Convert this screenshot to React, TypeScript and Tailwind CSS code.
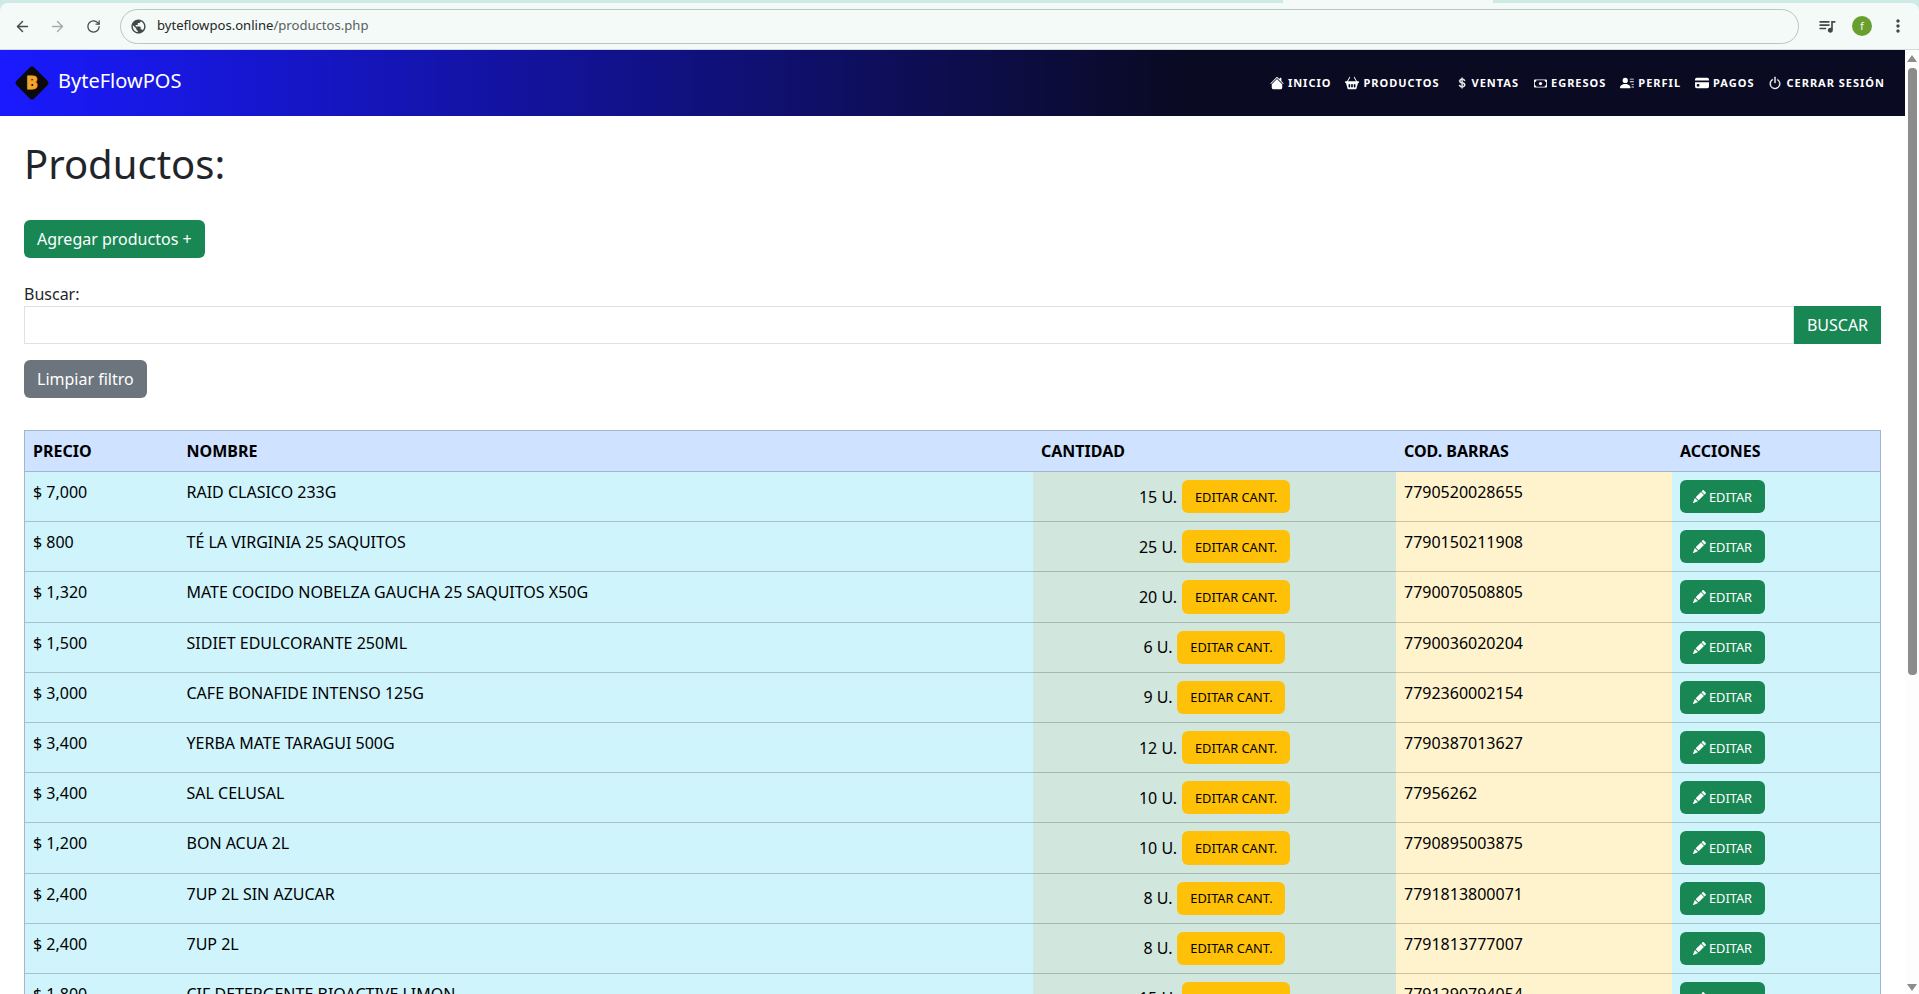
import React from "react";
import { ArrowLeft, ArrowRight, RotateCw } from "lucide-react";
import { MdPublic, MdQueueMusic, MdMoreVert } from "react-icons/md";
import {
  BsHouseFill,
  BsBasket2Fill,
  BsCurrencyDollar,
  BsCash,
  BsPersonLinesFill,
  BsCreditCardFill,
  BsPower,
  BsPencilFill,
} from "react-icons/bs";

const nav = [
  { icon: <BsHouseFill size={14} />, label: "INICIO" },
  { icon: <BsBasket2Fill size={14} />, label: "PRODUCTOS" },
  { icon: <BsCurrencyDollar size={12} stroke="currentColor" strokeWidth={0.6} className="ml-[2px]" />, label: "VENTAS" },
  { icon: <BsCash size={13} className="ml-[1px]" />, label: "EGRESOS" },
  { icon: <BsPersonLinesFill size={14} />, label: "PERFIL" },
  { icon: <BsCreditCardFill size={14} />, label: "PAGOS" },
  { icon: <BsPower size={14} stroke="currentColor" strokeWidth={0.5} />, label: "CERRAR SESIÓN" },
];

const rows = [
  ["$ 7,000", "RAID CLASICO 233G", "15 U.", "7790520028655"],
  ["$ 800", "TÉ LA VIRGINIA 25 SAQUITOS", "25 U.", "7790150211908"],
  ["$ 1,320", "MATE COCIDO NOBELZA GAUCHA 25 SAQUITOS X50G", "20 U.", "7790070508805"],
  ["$ 1,500", "SIDIET EDULCORANTE 250ML", "6 U.", "7790036020204"],
  ["$ 3,000", "CAFE BONAFIDE INTENSO 125G", "9 U.", "7792360002154"],
  ["$ 3,400", "YERBA MATE TARAGUI 500G", "12 U.", "7790387013627"],
  ["$ 3,400", "SAL CELUSAL", "10 U.", "77956262"],
  ["$ 1,200", "BON ACUA 2L", "10 U.", "7790895003875"],
  ["$ 2,400", "7UP 2L SIN AZUCAR", "8 U.", "7791813800071"],
  ["$ 2,400", "7UP 2L", "8 U.", "7791813777007"],
  ["$ 1,800", "CIF DETERGENTE BIOACTIVE LIMON", "15 U.", "7791290794054"],
];

function BrowserBar() {
  return (
    <header className="bg-[#cdebe4] pt-[3px] h-[50px] shrink-0 relative [font-family:'Noto_Sans',sans-serif]">
      <div className="absolute top-0 left-[1283px] w-[210px] h-[3px] bg-[#f4faf8]" />
      <div className="h-[47px] bg-[#f4faf8] rounded-t-[8px] border-b border-[#d3dbd8] flex items-center">
        <div className="w-[120px] flex items-center shrink-0 text-[#3f4a47]">
          <ArrowLeft size={17} className="ml-[14px]" strokeWidth={2} />
          <ArrowRight size={17} className="ml-[18px] text-[#a3adaa]" strokeWidth={2} />
          <RotateCw size={15} className="ml-[20px]" strokeWidth={2} />
        </div>
        <div className="w-[1679px] h-[35px] rounded-full border border-[#b9c6c2] flex items-center shrink-0">
          <MdPublic size={17} className="ml-[9px] text-[#3f4a47]" />
          <span className="ml-[10px] text-[13.1px] text-[#1f2624]">
            byteflowpos.online<span className="text-[#56605d]">/productos.php</span>
          </span>
        </div>
        <div className="flex-1 flex items-center text-[#3f4a47]">
          <MdQueueMusic size={20} className="ml-[18px]" />
          <div className="ml-[15px] w-[20px] h-[20px] rounded-full bg-[#6a9e2f] text-white text-[10px] flex items-center justify-center">
            f
          </div>
          <MdMoreVert size={20} className="ml-[16px]" />
        </div>
      </div>
    </header>
  );
}

function Navbar() {
  return (
    <nav className="h-[66px] bg-[linear-gradient(90deg,#1a1aff_0%,#0a0a23_62%)] flex items-center pl-[14px] pr-[20px]">
      <svg width="36" height="36" viewBox="0 0 36 36" className="shrink-0">
        <rect x="5.5" y="5.5" width="25" height="25" rx="3.5" transform="rotate(45 18 18)" fill="#0b0b0b" />
        <text
          x="18"
          y="24"
          textAnchor="middle"
          fontSize="17"
          fontWeight="900"
          fill="#f4a62a"
          stroke="#f4a62a"
          strokeWidth="0.8"
          fontFamily="'Noto Sans',sans-serif"
        >
          B
        </text>
      </svg>
      <span className="ml-[8px] text-[20px] text-white leading-[30px] -mt-[4px]">ByteFlowPOS</span>
      <ul className="ml-auto flex items-center gap-[14px] text-white text-[11px] font-bold tracking-[1px]">
        {nav.map((n) => (
          <li key={n.label} className="flex items-center gap-[4px]">
            {n.icon}
            <span>{n.label}</span>
          </li>
        ))}
      </ul>
    </nav>
  );
}

function ProductRow({ r }: { r: string[] }) {
  const td = "p-2 align-top border-b";
  return (
    <tr className="text-black">
      <td className={`${td} bg-[#cff4fc] border-[#a6c3ca]`}>{r[0]}</td>
      <td className={`${td} bg-[#cff4fc] border-[#a6c3ca]`}>{r[1]}</td>
      <td className={`${td} bg-[#d1e7dd] border-[#a7b9b1]`}>
        <div className="flex items-center justify-center gap-[5px]">
          <span>{r[2]}</span>
          <button className="h-[33.2px] w-[108px] rounded-[6px] bg-[#ffc107] text-black text-[12.8px]">EDITAR CANT.</button>
        </div>
      </td>
      <td className={`${td} bg-[#fff3cd] border-[#ccc2a4]`}>{r[3]}</td>
      <td className={`${td} bg-[#cff4fc] border-[#a6c3ca]`}>
        <button className="h-[33.2px] w-[85px] rounded-[6px] bg-[#198754] text-white text-[12.8px] flex items-center justify-center gap-[3px]">
          <BsPencilFill size={13} />
          EDITAR
        </button>
      </td>
    </tr>
  );
}

export default function App() {
  return (
    <div className="h-[994px] w-full overflow-hidden flex flex-col bg-white [font-family:'Noto_Sans',sans-serif]">
      <BrowserBar />
      <div className="flex flex-1 min-h-0">
        <main className="flex-1 min-w-0 overflow-hidden">
          <Navbar />
          <div className="px-[24px] pt-[24px]">
            <h1 className="text-[40px] leading-[48px] text-[#212529]">Productos:</h1>
            <button className="mt-[32px] block h-[38px] px-[13px] rounded-[6px] bg-[#198754] text-white text-[16px]">
              Agregar productos +
            </button>
            <label className="mt-[24px] block text-[16px] leading-[24px] text-[#212529]">Buscar:</label>
            <div className="flex">
              <input className="flex-1 h-[38px] border border-[#dee2e6] bg-white outline-none" />
              <button className="w-[87px] h-[38px] bg-[#198754] text-white text-[16px]">BUSCAR</button>
            </div>
            <button className="mt-[16px] block h-[38px] px-[13px] rounded-[6px] bg-[#6c757d] text-white text-[16px]">
              Limpiar filtro
            </button>
            <div className="mt-[32px] border border-[#a6b5cc]">
              <table className="w-full table-fixed border-separate border-spacing-0 text-[16px] leading-[24px]">
                <colgroup>
                  <col className="w-[153.5px]" />
                  <col className="w-[854.5px]" />
                  <col className="w-[363px]" />
                  <col className="w-[276px]" />
                  <col className="w-[208px]" />
                </colgroup>
                <thead>
                  <tr>
                    {["PRECIO", "NOMBRE", "CANTIDAD", "COD. BARRAS", "ACCIONES"].map((h) => (
                      <th key={h} className="p-2 text-left font-bold text-black bg-[#cfe2ff] border-b border-[#a6b5cc]">
                        {h}
                      </th>
                    ))}
                  </tr>
                </thead>
                <tbody>
                  {rows.map((r) => (
                    <ProductRow key={r[3]} r={r} />
                  ))}
                </tbody>
              </table>
            </div>
          </div>
        </main>
        <aside className="w-[14px] shrink-0 bg-[#fdfdfd] flex flex-col items-center">
          <div className="mt-[5px] w-0 h-0 border-x-[5px] border-x-transparent border-b-[7px] border-b-[#8c8c8c]" />
          <div className="mt-[6px] w-[9px] h-[607px] rounded-[4px] bg-[#8c8c8c]" />
          <div className="mt-auto mb-[3px] w-0 h-0 border-x-[5px] border-x-transparent border-t-[7px] border-t-[#8c8c8c]" />
        </aside>
      </div>
    </div>
  );
}
